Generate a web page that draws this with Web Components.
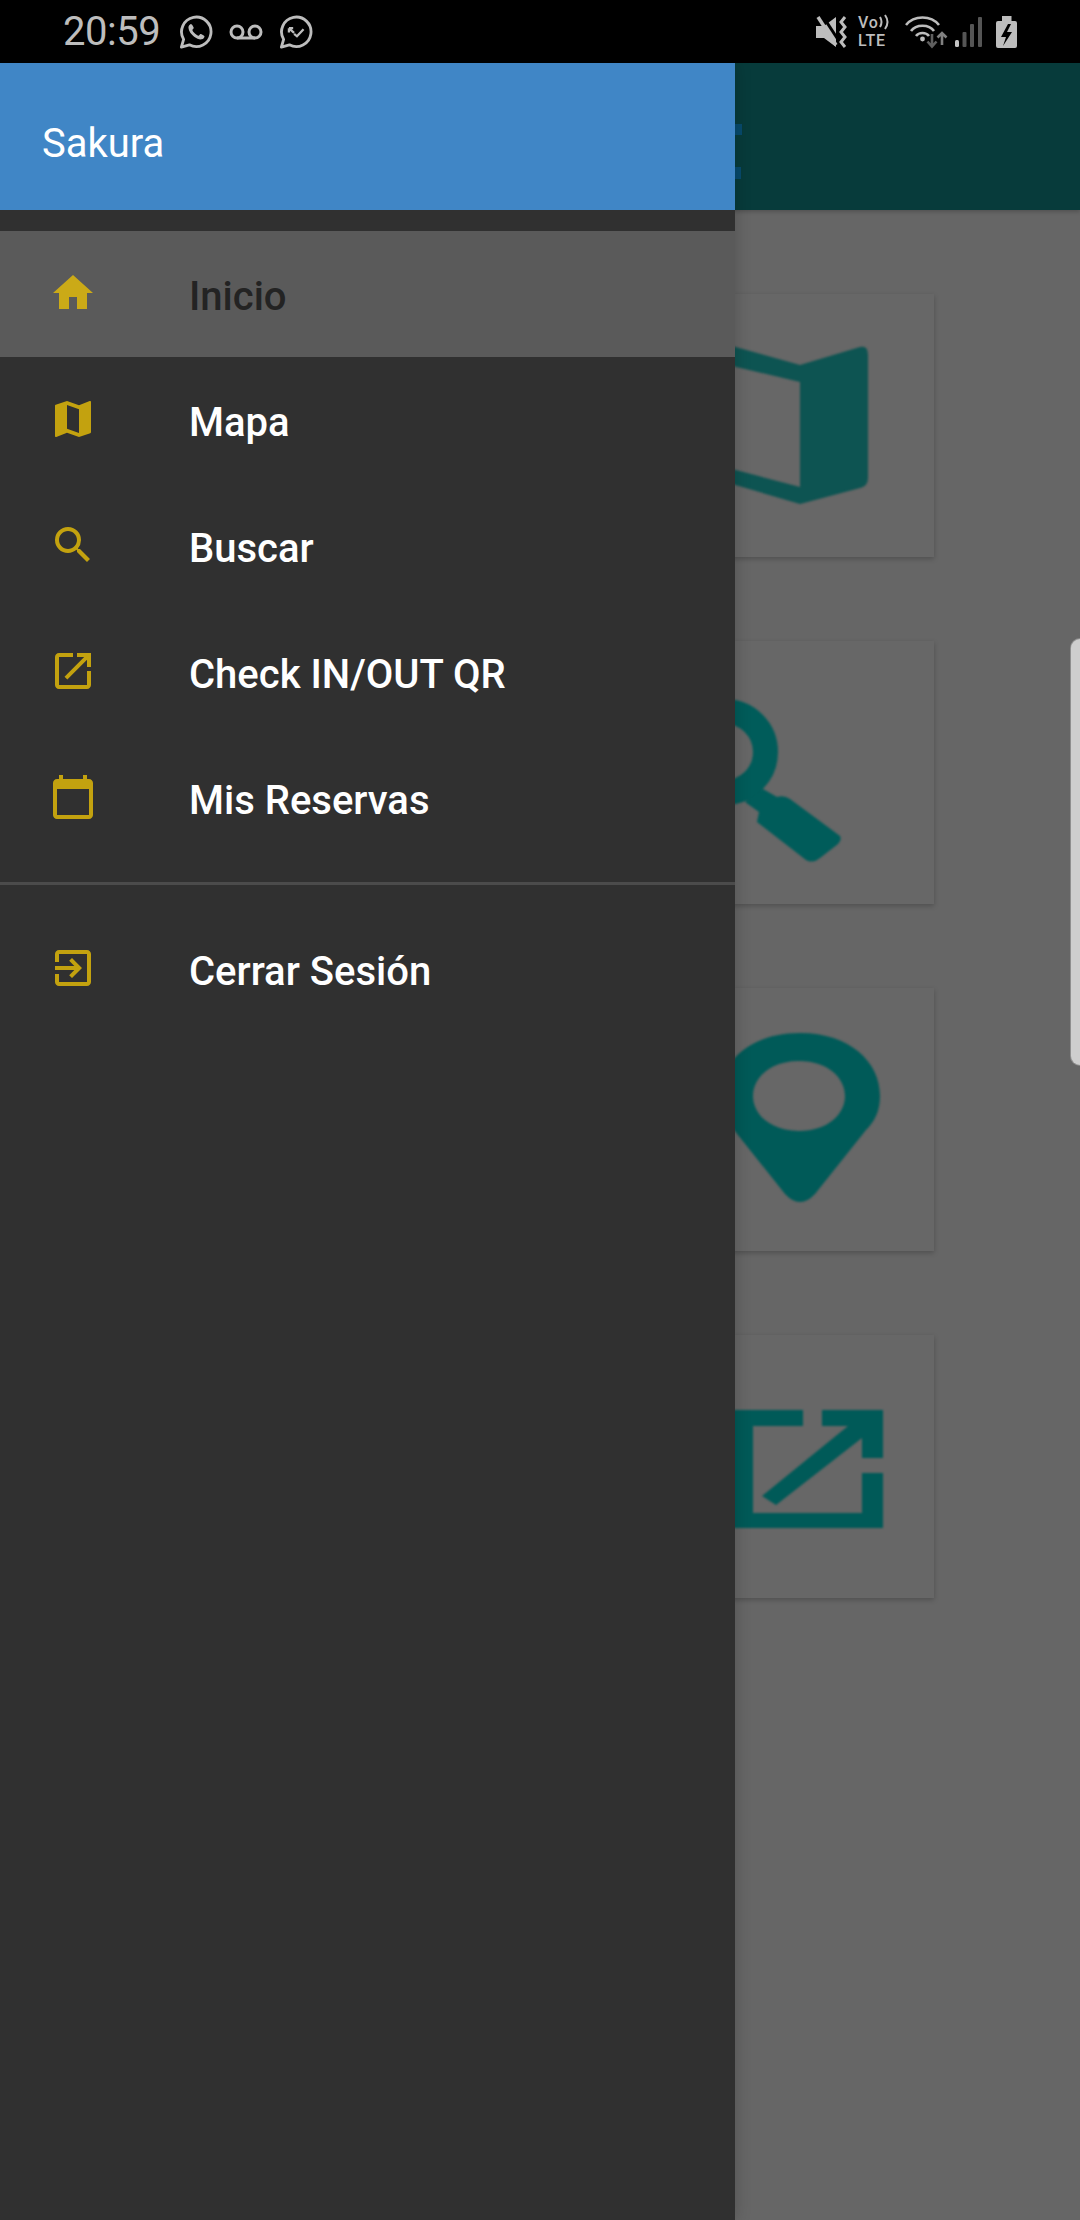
<!DOCTYPE html>
<html>
<head>
<meta charset="utf-8">
<title>Sakura</title>
<style>
   html, body {
      margin: 0;
      padding: 0;
      width: 1080px;
      height: 2220px;
      overflow: hidden;
      background: #666;
      font-family: Roboto, sans-serif;
   }
   body {
      display: flex;
      flex-direction: column;
      position: relative;
   }
</style>
</head>
<body>
<template id="status_template">
   <style>
      :host {
         display: flex;
         flex: none;
         height: 63px;
         background: #000;
         align-items: center;
         color: #bdbdbd;
         position: relative;
         z-index: 3;
      }
      .time {
         font-size: 40px;
         font-weight: 400;
         letter-spacing: -0.5px;
         margin-left: 63px;
         width: 116px;
      }
      .group {
         display: flex;
         align-items: center;
      }
      svg { display: block; flex: none; }
      .right { margin-left: auto; margin-right: 63px; }
      .volte {
         margin-left: 11px;
         width: 30px;
         font-weight: 500;
         font-size: 16px;
         letter-spacing: 0.8px;
         line-height: 19px;
         white-space: nowrap;
      }
      .vo { display: flex; align-items: center; height: 17px; overflow: visible; }
   </style>
   <div class="time">20:59</div>
   <div class="group">
      <svg width="34" height="34" viewBox="0 0 36 36" fill="none" stroke="#bdbdbd" stroke-width="3">
         <path d="M2.500 34l2.400-8.200A15.600 15.600 0 1 1 11 31.600z" stroke-linejoin="round"/>
         <path fill="#bdbdbd" stroke="none" d="M12.500 9.500c-1 .2-2.600 1.800-2.500 4 .2 3.500 3 7.200 6 9.500 2.600 2 6 3.300 8 2.800 1.700-.5 3-2 3-3.400 0-.7-3.600-2.500-4.300-2.400-.6.100-1.400 1.800-2 1.900-1.400.2-6.400-4-6.500-6 0-.6 1.400-1.500 1.400-2.200 0-.7-1.800-4.300-3.100-4.200z"/>
      </svg>
      <svg width="34" height="16" viewBox="0 0 34 16" style="margin-left:16px" fill="none" stroke="#bdbdbd" stroke-width="3">
         <circle cx="8" cy="8" r="6"/>
         <circle cx="26" cy="8" r="6"/>
         <path d="M8 14h18"/>
      </svg>
      <svg width="34" height="34" viewBox="0 0 36 36" style="margin-left:16px" fill="none" stroke="#bdbdbd" stroke-width="3">
         <path d="M2.500 34l2.400-8.200A15.600 15.600 0 1 1 11 31.600z" stroke-linejoin="round"/>
         <path stroke-width="2.400" d="M10.500 14l5.500 5M10.500 14v4.500M10.500 14H15"/>
         <path stroke-width="2.400" d="M16 20l3 2.500 7-7.500"/>
      </svg>
   </div>
   <div class="group right">
      <svg width="31" height="32" viewBox="0 0 31 32">
         <path fill="#bdbdbd" d="M0 10H8L20 1V31L8 22H0z"/>
         <path fill="none" stroke="#000" stroke-width="3" d="M6 -1L23 25"/>
         <path fill="none" stroke="#bdbdbd" stroke-width="3.500" d="M2 1L20 29"/>
         <path fill="none" stroke="#bdbdbd" stroke-width="3" d="M29 1L25 6 29 11 25 16 29 21 25 26 29 31"/>
      </svg>
      <div class="volte">
         <div class="vo">Vo<svg width="11" height="16" viewBox="0 0 11 16" fill="none" stroke="#bdbdbd" stroke-width="2"><path d="M1 3q3 5 0 10M6 1q5 7 0 14"/></svg></div>
         <div>LTE</div>
      </div>
      <svg width="44" height="34" viewBox="0 0 44 34" style="margin-left:17px" fill="none" stroke="#bdbdbd" stroke-width="2.600">
         <path d="M1 10C9 0 26 0 34 10"/>
         <path d="M6 16C11 9 24 9 29 16"/>
         <path d="M11 21C14 17 21 17 24 21"/>
         <circle cx="17.500" cy="24" r="2.400" fill="#bdbdbd" stroke="none"/>
         <path d="M27 19V31M22.500 26.500L27 31.500 31.500 26.500" stroke="#5f5f5f"/>
         <path d="M37 30V18M32.500 22.500L37 18 41.500 22.500" stroke="#808080"/>
      </svg>
      <svg width="27" height="30" viewBox="0 0 27 30" style="margin-left:6px" fill="#555">
         <rect x="0" y="23" width="4" height="7" rx="1.500" fill="#c4c4c4"/>
         <rect x="7.500" y="15" width="4" height="15" rx="1"/>
         <rect x="15" y="7" width="4" height="23" rx="1"/>
         <rect x="23" y="0" width="4" height="30" rx="1"/>
      </svg>
      <svg width="21" height="32" viewBox="0 0 21 32" style="margin-left:14px">
         <path fill="#bdbdbd" d="M6 0h9.500v5H19q2 0 2 2v23q0 2-2 2H2q-2 0-2-2V7q0-2 2-2h4z"/>
         <path fill="#000" d="M12 8L5 21h5l-3 9 9-14h-5l4-8z"/>
      </svg>
   </div>
</template>

<template id="appbar_template">
   <style>
      :host {
         display: block;
         flex: none;
         height: 147px;
         background: #073b3b;
         box-shadow: 0 2px 4px rgba(0,0,0,0.2);
         position: relative;
      }
      .mark {
         position: absolute;
         left: 700px;
         width: 42px;
         height: 11px;
         background: #074a6c;
      }
   </style>
   <div class="mark" style="top:61px"></div>
   <div class="mark" style="top:104px;width:41px;height:12px"></div>
</template>

<template id="card_template">
   <style>
      :host {
         display: block;
         width: 268px;
         height: 263px;
         background: #676767;
         box-shadow: 0 2px 5px rgba(0,0,0,0.22);
      }
      ::slotted(svg) {
         display: block;
         width: 268px;
         height: 263px;
         filter: blur(1.2px);
      }
   </style>
   <slot></slot>
</template>

<template id="grid_template">
   <style>
      :host {
         display: flex;
         flex: 1;
         flex-direction: column;
         gap: 84px;
         padding: 84px 146px 0 666px;
      }
   </style>
   <slot></slot>
</template>

<template id="handle_template">
   <style>
      :host {
         display: block;
         position: absolute;
         top: 639px;
         right: 0;
         width: 9px;
         height: 426px;
         background: #cecece;
         border-radius: 10px 0 0 10px;
         box-shadow: 0 0 0 1px #8f8f8f;
      }
   </style>
</template>

<template id="drawer_template">
   <style>
      :host {
         display: flex;
         flex-direction: column;
         position: absolute;
         top: 63px;
         left: 0;
         bottom: 0;
         width: 735px;
         background: #303030;
         box-shadow: 2px 0 14px rgba(0,0,0,0.16);
         z-index: 2;
      }
      .head {
         display: flex;
         align-items: center;
         height: 147px;
         padding: 13px 0 0 42px;
         flex: none;
         box-sizing: border-box;
         background: #4086c6;
         color: #fff;
         font-size: 40px;
      }
      .list {
         padding: 21px 0;
      }
      .divider {
         height: 3px;
         background: #4b4b4b;
      }
   </style>
   <div class="head">Sakura</div>
   <div class="list"><slot name="main"></slot></div>
   <div class="divider"></div>
   <div class="list"><slot name="foot"></slot></div>
</template>

<template id="item_template">
   <style>
      :host {
         display: flex;
         align-items: center;
         height: 126px;
         color: #fff;
         font-size: 40px;
         font-weight: 500;
      }
      :host([active]) {
         background: #5a5a5a;
         color: #232323;
      }
      .icon {
         flex: none;
         width: 48px;
         height: 48px;
         margin-left: 49px;
         margin-right: 92px;
         margin-top: -2px;
      }
      ::slotted(svg) {
         display: block;
         width: 48px;
         height: 48px;
      }
      .label { margin-top: 4px; }
   </style>
   <div class="icon"><slot name="icon"></slot></div>
   <div class="label"><slot></slot></div>
</template>

<status-bar></status-bar>
<app-bar></app-bar>
<card-grid>
   <menu-card>
      <svg viewBox="666 294 268 263">
         <path fill="#0d5452" d="M732 346L800 365 860 347Q868 345 868 355V478Q868 486 860 488L800 504 732 484V469L800 487V382L732 366z"/>
      </svg>
   </menu-card>
   <menu-card>
      <svg viewBox="666 641 268 263">
         <circle cx="725" cy="752" r="40.500" fill="none" stroke="#005c5a" stroke-width="25"/>
         <path fill="#005c5a" d="M763 789L777 797Q784 795 790 799L840 836Q842 840 838 844L820 858Q813 864 806 860L757 822 759 812 745 802z"/>
      </svg>
   </menu-card>
   <menu-card>
      <svg viewBox="666 988 268 263">
         <path fill="#005a58" fill-rule="evenodd" d="M800 1033C850 1033 880 1062 880 1096 880 1112 874 1122 866 1130L815 1194Q800 1210 785 1194L734 1130C726 1122 720 1112 720 1096 720 1062 750 1033 800 1033zM799 1061C770 1061 753 1078 753 1096 753 1114 770 1131 799 1131 828 1131 845 1114 845 1096 845 1078 828 1061 799 1061z"/>
      </svg>
   </menu-card>
   <menu-card>
      <svg viewBox="666 1335 268 263">
         <path fill="#005a58" d="M732 1410H803V1426H753V1513H862V1473H883V1528H732zM822 1410H883V1458H862V1438L776 1505 762 1496 848 1426H822z"/>
      </svg>
   </menu-card>
</card-grid>
<edge-handle></edge-handle>
<nav-drawer>
   <drawer-item slot="main" active>
      <svg slot="icon" viewBox="0 0 24 24"><path fill="#cbaa17" d="M10 20v-6h4v6h5v-8h3L12 3 2 12h3v8z"/></svg>
      Inicio
   </drawer-item>
   <drawer-item slot="main">
      <svg slot="icon" viewBox="0 0 24 24"><path fill="#c3a20f" d="M20.500 3l-.160.030L15 5.100 9 3 3.360 4.900c-.21.070-.36.250-.36.480V20.500c0 .28.220.5.500.5l.160-.030L9 18.900l6 2.100 5.640-1.900c.21-.07.360-.25.360-.48V3.500c0-.28-.22-.5-.5-.5zM15 19l-6-2.110V5l6 2.110V19z"/></svg>
      Mapa
   </drawer-item>
   <drawer-item slot="main">
      <svg slot="icon" viewBox="0 0 24 24"><path fill="#c3a20f" d="M15.500 14h-.79l-.28-.27A6.470 6.470 0 0 0 16 9.500 6.500 6.500 0 1 0 9.500 16c1.610 0 3.090-.59 4.230-1.570l.27.280v.79l5 4.990L20.490 19l-4.990-5zm-6 0C7.010 14 5 11.990 5 9.500S7.010 5 9.500 5 14 7.010 14 9.500 11.990 14 9.500 14z"/></svg>
      Buscar
   </drawer-item>
   <drawer-item slot="main">
      <svg slot="icon" viewBox="0 0 24 24"><path fill="#c3a20f" d="M19 19H5V5h7V3H5c-1.110 0-2 .9-2 2v14c0 1.100.89 2 2 2h14c1.100 0 2-.9 2-2v-7h-2v7zM14 3v2h3.590l-9.830 9.830 1.410 1.410L19 6.410V10h2V3h-7z"/></svg>
      Check IN/OUT QR
   </drawer-item>
   <drawer-item slot="main">
      <svg slot="icon" viewBox="0 0 24 24"><path fill="#c3a20f" d="M20 3h-1V1h-2v2H7V1H5v2H4c-1.100 0-2 .9-2 2v16c0 1.100.9 2 2 2h16c1.100 0 2-.9 2-2V5c0-1.100-.9-2-2-2zm0 18H4V8h16v13z"/></svg>
      Mis Reservas
   </drawer-item>
   <drawer-item slot="foot">
      <svg slot="icon" viewBox="0 0 24 24"><path fill="#c3a20f" d="M10.090 15.590L11.500 17l5-5-5-5-1.410 1.410L12.670 11H3v2h9.670l-2.580 2.590zM19 3H5c-1.110 0-2 .9-2 2v4h2V5h14v14H5v-4H3v4c0 1.100.89 2 2 2h14c1.100 0 2-.9 2-2V5c0-1.100-.9-2-2-2z"/></svg>
      Cerrar Sesión
   </drawer-item>
</nav-drawer>

<script>
   function define_from_template(tag, template_id)
   {
      const template = document.getElementById(template_id);
      customElements.define(tag, class extends HTMLElement
      {
         constructor()
         {
            super();
            this.attachShadow({ mode: 'open' }).appendChild(template.content.cloneNode(true));
         }
      });
   }

   define_from_template('status-bar', 'status_template');
   define_from_template('app-bar', 'appbar_template');
   define_from_template('menu-card', 'card_template');
   define_from_template('card-grid', 'grid_template');
   define_from_template('edge-handle', 'handle_template');
   define_from_template('nav-drawer', 'drawer_template');
   define_from_template('drawer-item', 'item_template');
</script>
</body>
</html>
